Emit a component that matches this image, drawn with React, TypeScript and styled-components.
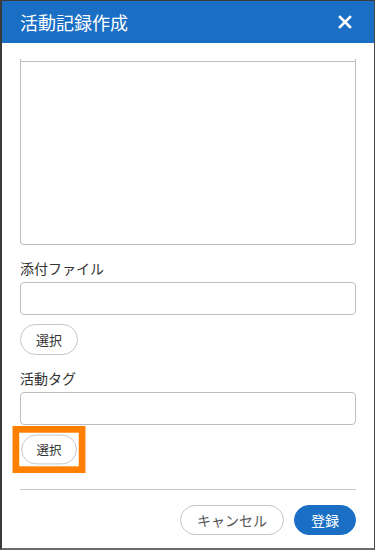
import styled, { createGlobalStyle } from 'styled-components'

const GlobalStyle = createGlobalStyle`
	html, body {
		margin: 0;
		padding: 0;
		background: #fff;
	}
	* {
		box-sizing: border-box;
	}
`

const font = `'Noto Sans CJK JP', 'Noto Sans', sans-serif`

export default function App() {
	return (
		<>
			<GlobalStyle />
			<Modal>
				<Header>
					<Title>活動記録作成</Title>
					<CloseButton aria-label='閉じる'>
						<svg width='14' height='14' viewBox='0 0 14 14'>
							<path d='M2 2 L12 12 M12 2 L2 12' stroke='#fff' strokeWidth='2.6' strokeLinecap='square' />
						</svg>
					</CloseButton>
				</Header>
				<Body>
					<MemoArea />
					<Field>
						<Label>添付ファイル</Label>
						<TextInput />
						<SelectButton>選択</SelectButton>
					</Field>
					<Field>
						<Label>活動タグ</Label>
						<TextInput />
						<SelectButton highlighted>選択</SelectButton>
					</Field>
				</Body>
				<Footer>
					<FooterButton>キャンセル</FooterButton>
					<FooterButton primary>登録</FooterButton>
				</Footer>
			</Modal>
		</>
	)
}

const Modal = styled.div`
	width: 375px;
	height: 550px;
	display: flex;
	flex-direction: column;
	border-top: 1px solid #3a3a3a;
	border-right: 1px solid #4a4a4a;
	border-bottom: 2px solid #6a6a6a;
	border-left: 2px solid #3a3a3a;
	background: #fff;
	font-family: ${font};
	overflow: hidden;
`

const Header = styled.div`
	height: 42px;
	flex-shrink: 0;
	display: flex;
	align-items: center;
	justify-content: space-between;
	padding: 0 22px 0 18px;
	background: #1a6fc4;
`

const Title = styled.h1`
	margin: 0;
	color: #fff;
	font-size: 18px;
	font-weight: 400;
	line-height: 1;
`

const CloseButton = styled.button`
	display: flex;
	padding: 0;
	border: none;
	background: transparent;
	cursor: pointer;
`

const Body = styled.div`
	flex: 1;
	padding: 16px 18px 0 18px;
	display: flex;
	flex-direction: column;
	gap: 13px;
`

const MemoArea = styled.div`
	height: 186px;
	border: 1px solid #bdbdc6;
	border-top: none;
	border-radius: 0 0 4px 4px;
	box-shadow: inset 0 2px 0 #fff, inset 0 3px 0 #bdbdc6;
`

const Field = styled.div`
	display: flex;
	flex-direction: column;
	align-items: flex-start;
`

const Label = styled.label`
	color: #333;
	font-size: 14px;
	line-height: 20px;
	margin-bottom: 4px;
`

const TextInput = styled.div`
	width: 100%;
	height: 33px;
	border: 1px solid #bdbdc6;
	border-radius: 4px;
	margin-bottom: 9px;
`

const SelectButton = styled.button<{ highlighted?: boolean }>`
	position: relative;
	width: 58px;
	height: 31px;
	border: 1px solid #c4c4cc;
	border-radius: 16px;
	background: #fff;
	color: #333;
	font-family: ${font};
	font-size: 13px;
	padding: 0;
	cursor: pointer;
	${({ highlighted }) =>
		highlighted &&
		`
		transform: scale(0.96);
		&::after {
			content: '';
			position: absolute;
			inset: -10px -10px -10px -10px;
			border: 7px solid #ff8000;
			pointer-events: none;
		}
	`}
`

const Footer = styled.div`
	margin: 0 18px 0 18px;
	padding: 15px 0 13px;
	border-top: 1px solid #c4c4c4;
	display: flex;
	justify-content: flex-end;
	gap: 10px;
`

const FooterButton = styled.button<{ primary?: boolean }>`
	height: 30px;
	padding: 0 16px;
	border-radius: 15px;
	border: 1px solid ${({ primary }) => (primary ? '#1a6fc4' : '#c4c4cc')};
	background: ${({ primary }) => (primary ? '#1a6fc4' : '#fff')};
	color: ${({ primary }) => (primary ? '#fff' : '#555')};
	font-family: ${font};
	font-size: 14px;
	cursor: pointer;
`
